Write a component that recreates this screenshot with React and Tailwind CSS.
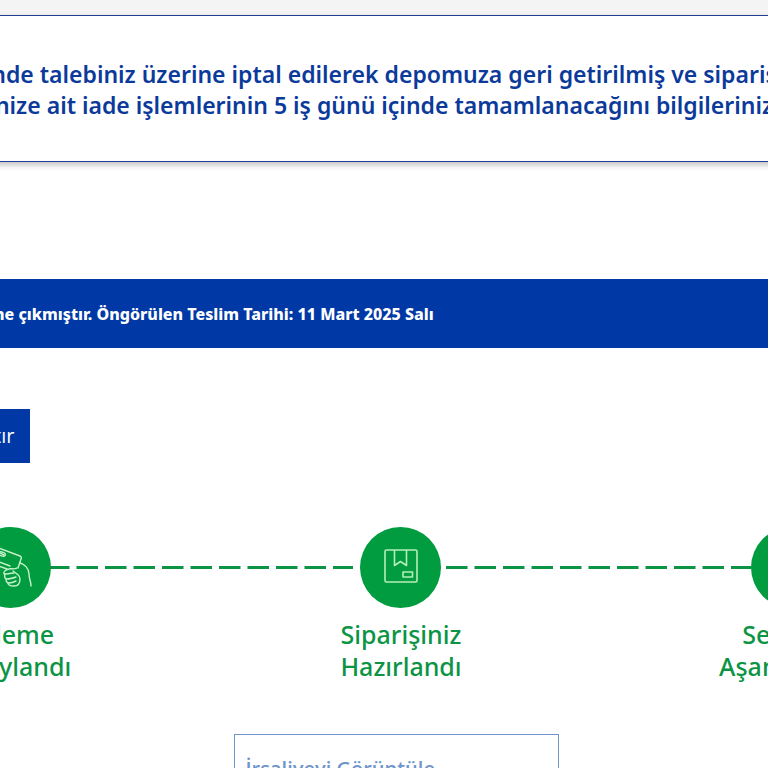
function CardHandIcon() {
  return (
    <svg viewBox="0 0 48 48" className="size-12" fill="none" stroke="#c6f3c9" strokeWidth="1.4" strokeLinecap="round" strokeLinejoin="round" aria-hidden="true">
      <path d="M20 27 3 21 a2 2 0 0 1-1-3 L6 6 a2 2 0 0 1 3-1 L33 14 a2 2 0 0 1 1 3 L31 26" />
      <path d="M4 17 23 24" />
      <ellipse cx="15" cy="12" rx="3.5" ry="2" transform="rotate(18 15 12)" />
      <path d="M13 11 17 13" />
      <path d="M30 26 c-3 2-6 0-8 1 c-4 1-6 3-5 5 c4 0 7-1 10-1" />
      <path d="M18 32 c-1 3 0 5 2 5 c3 0 6-1 9-2" />
      <path d="M19 37 c0 3 1 4 3 4 c3 0 5-1 7-2" />
      <path d="M21 41 c0 2 2 3 6 3 c4 0 6-2 6-7 c0-3-2-4-3-5 L26 29" />
      <path d="M33 21 c4 1 9 5 9 11 c0 5 2 7 2 12" />
    </svg>
  );
}

function PackageIcon() {
  return (
    <svg viewBox="0 0 36 36" className="size-9" fill="none" stroke="#b4efb9" strokeWidth="1.6" strokeLinejoin="round" aria-hidden="true">
      <rect x="2" y="2" width="32" height="32" rx="1.5" />
      <path d="M11.5 2v15.5l6-4 6 4V2" />
      <rect x="20" y="24" width="9.5" height="5" />
    </svg>
  );
}

function Connector({ className }) {
  return (
    <svg className={`h-[3px] min-w-0 flex-1 ${className}`} aria-hidden="true">
      <line x1="0" y1="1.5" x2="100%" y2="1.5" stroke="#0b9444" strokeWidth="3" strokeDasharray="21.5 7" />
    </svg>
  );
}

function StepCircle({ children }) {
  return (
    <div className="flex size-[81px] shrink-0 items-center justify-center rounded-full bg-[#009c3f] pb-1">
      {children}
    </div>
  );
}

const steps = [
  ['Ödeme', 'Onaylandı'],
  ['Siparişiniz', 'Hazırlandı'],
  ['Sevkiyat', 'Aşamasında'],
];

export default function App() {
  return (
    <main className="h-screen overflow-hidden bg-white font-['Noto_Sans',sans-serif]">
      <div className="h-[15px] bg-[#f4f4f4]" />

      <section className="-mx-2 flex justify-center border-y border-[#1f3f94] pt-[43px] pb-10 shadow-[0_3px_6px_rgba(0,0,0,0.25)]">
        <p className="shrink-0 text-center text-[23px] leading-[31px] font-semibold whitespace-nowrap text-[#0b3a9b]">
          nde talebiniz üzerine iptal edilerek depomuza geri getirilmiş ve sipariş
          <br />
          nize ait iade işlemlerinin 5 iş günü içinde tamamlanacağını bilgileriniz
        </p>
      </section>

      <section className="mt-[117px] bg-[#0038a5] pt-[23px] pb-[22px]">
        <p className="-ml-1.5 text-base leading-6 font-extrabold whitespace-nowrap text-white">
          ne çıkmıştır. Öngörülen Teslim Tarihi: 11 Mart 2025 Salı
        </p>
      </section>

      <button type="button" className="mt-[61px] -ml-[22px] block bg-[#0038a5] px-4 py-[15px] font-['Open_Sans',sans-serif] text-xl leading-6 text-white">
        tır
      </button>

      <section className="mt-16 flex justify-center pl-[34px]">
        <div className="w-[1172px] shrink-0">
          <div className="flex items-center px-[155px]">
            <StepCircle>
              <CardHandIcon />
            </StepCircle>
            <Connector className="mr-[7px] -ml-[3px]" />
            <StepCircle>
              <PackageIcon />
            </StepCircle>
            <Connector className="ml-[5px]" />
            <StepCircle />
          </div>
          <ol className="mt-[10px] grid grid-cols-3 text-center text-[25px] leading-8 font-medium text-[#0b9444]">
            {steps.map(([first, second]) => (
              <li key={first}>
                {first}
                <br />
                {second}
              </li>
            ))}
          </ol>
        </div>
      </section>

      <div className="mt-[52px] flex justify-center pl-6">
        <button type="button" className="w-[325px] border border-[#6f95cc] px-[11px] py-5 text-left font-['Open_Sans',sans-serif] text-xl leading-7 font-semibold text-[#6f95cc]">
          İrsaliyeyi Görüntüle
        </button>
      </div>
    </main>
  );
}
